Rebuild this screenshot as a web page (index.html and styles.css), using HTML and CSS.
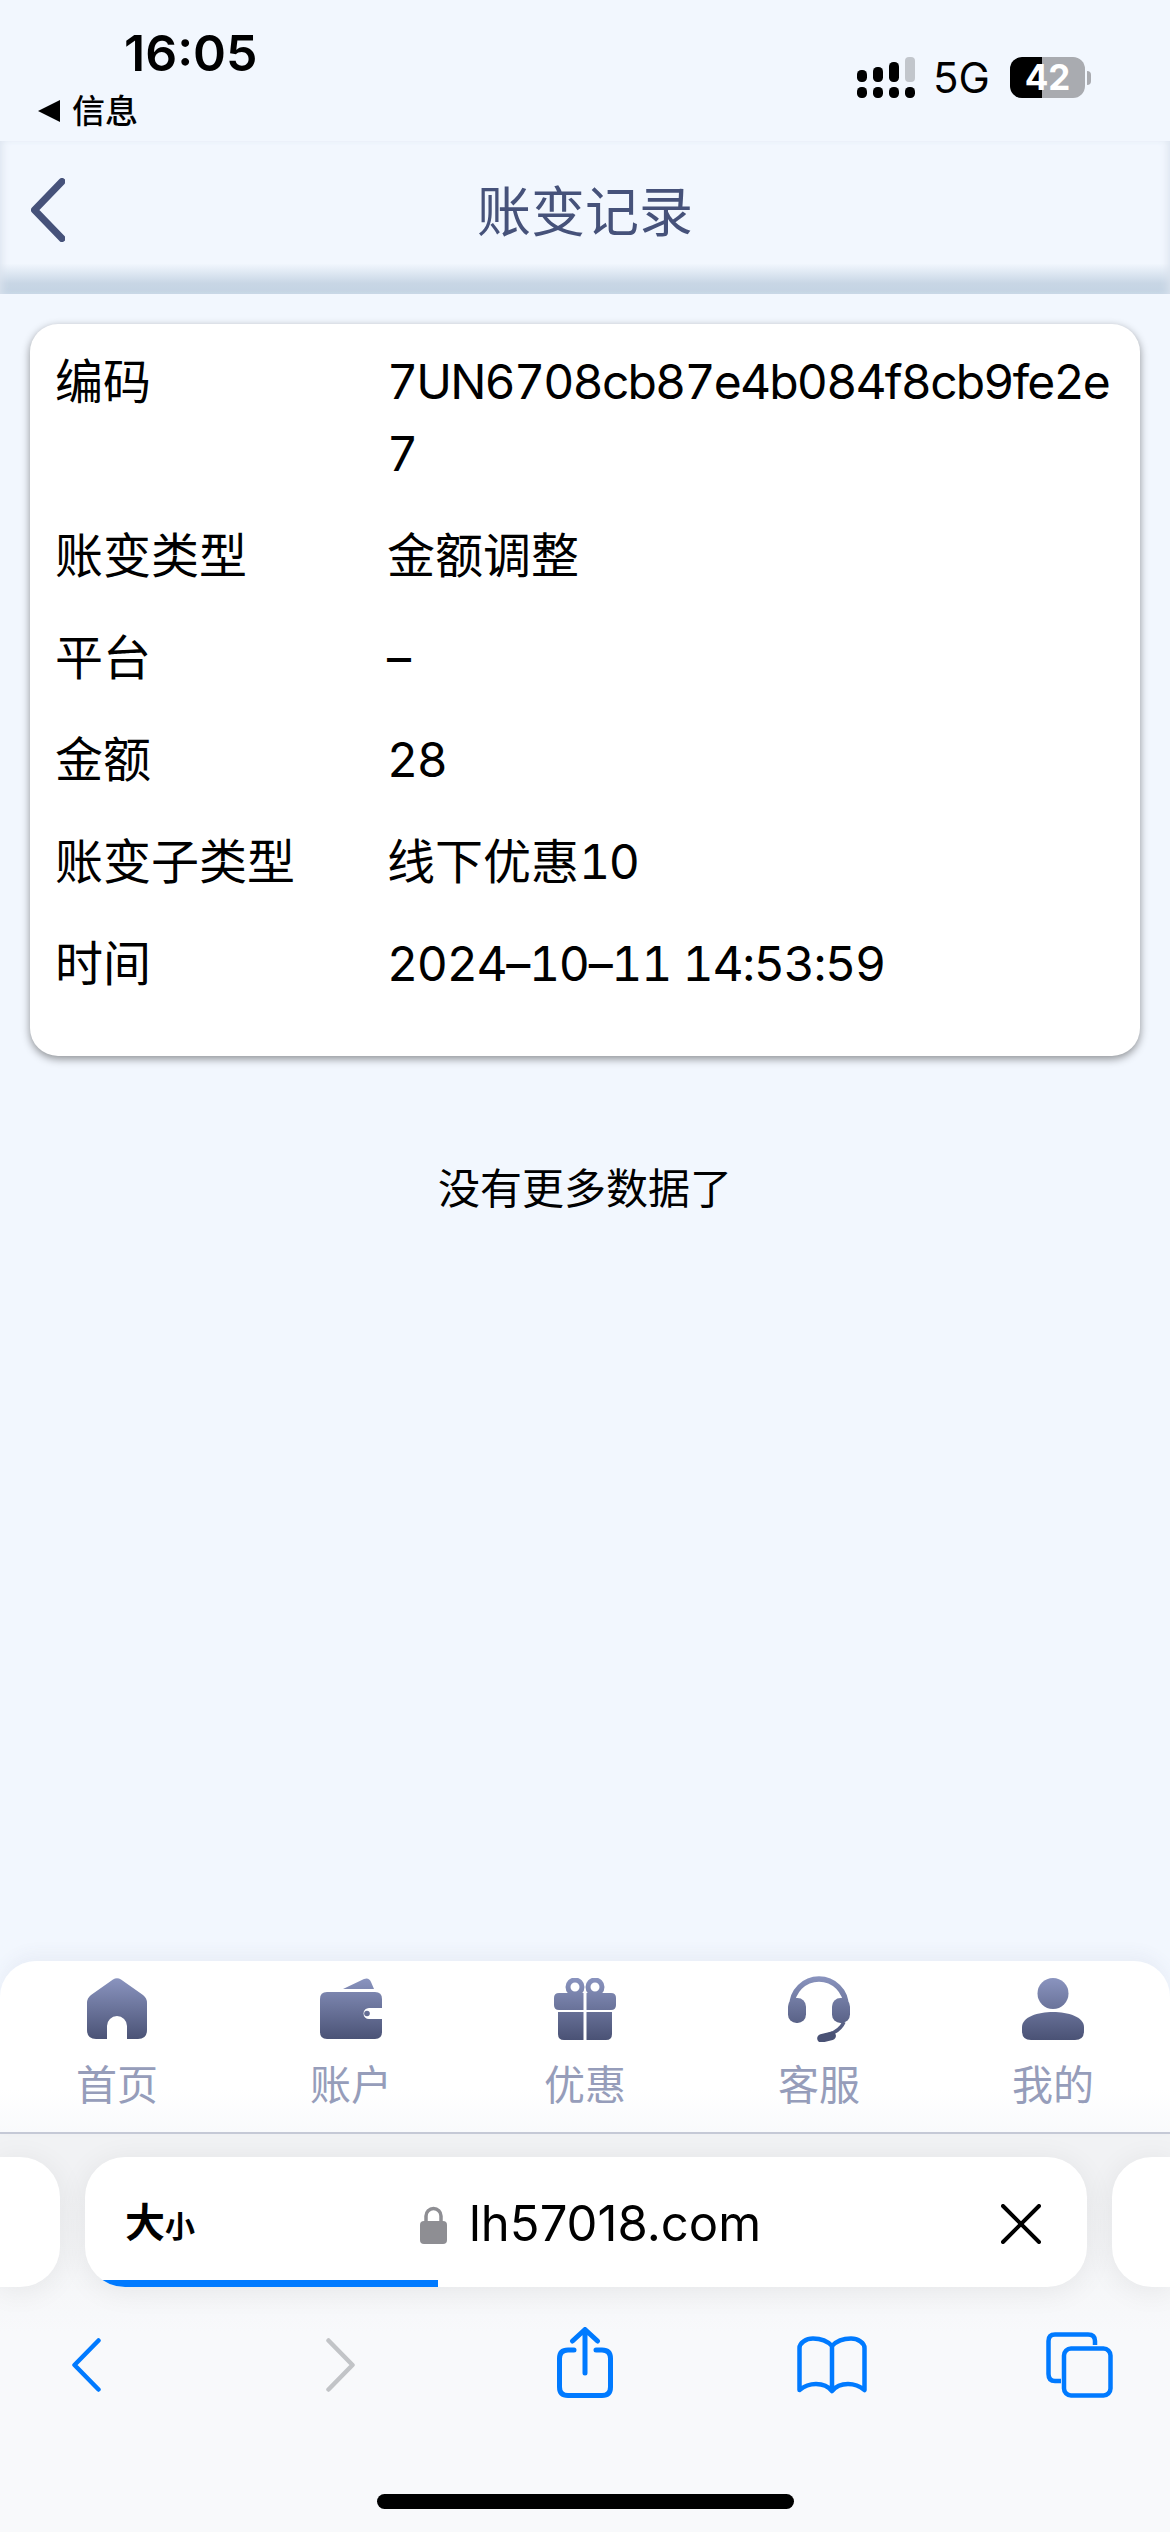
FILE: index.html
```html
<!DOCTYPE html>
<html lang="zh-CN">
<head>
  <meta charset="UTF-8" />
  <meta name="viewport" content="width=device-width, initial-scale=1.0"/>
  <title>账变记录</title>
  <link rel="stylesheet" href="styles.css">
</head>
<body>

  <div class="page">
    <!-- Status bar -->
    <div class="status-bar">
      <div class="status-left">
        <div class="clock">16:05</div>
        <div class="back-app"><span class="back-arrow"></span>信息</div>
      </div>
      <div class="status-right">
        <svg class="signal" viewBox="0 0 58 41">
          <rect x="0" y="13" width="10" height="12" rx="4.5" fill="#000"/>
          <rect x="16" y="10" width="10" height="15" rx="4.5" fill="#000"/>
          <rect x="32" y="5" width="10" height="20" rx="4.5" fill="#000"/>
          <rect x="48" y="0" width="10" height="25" rx="4" fill="#c2c6cc"/>
          <rect x="0" y="30" width="10" height="11" rx="4.5" fill="#000"/>
          <rect x="16" y="30" width="10" height="11" rx="4.5" fill="#000"/>
          <rect x="32" y="30" width="10" height="11" rx="4.5" fill="#000"/>
          <rect x="48" y="30" width="10" height="11" rx="4.5" fill="#000"/>
        </svg>
        <span class="network">5G</span>
        <div class="battery"><span class="battery-level">42</span></div>
        <span class="battery-nub"></span>
      </div>
    </div>

    <!-- Header -->
    <div class="header">
      <svg class="header-back" viewBox="0 0 34 64">
        <path d="M31 3.500 L3.500 32 L31 60.500" fill="none" stroke="#46527a" stroke-width="7" stroke-linecap="round" stroke-linejoin="round"/>
      </svg>
      <h1>账变记录</h1>
    </div>

    <!-- Records -->
    <div class="content">
      <div class="card">
        <div class="row"><div class="label">编码</div><div class="value code">7UN6708cb87e4b084f8cb9fe2e7</div></div>
        <div class="row"><div class="label">账变类型</div><div class="value">金额调整</div></div>
        <div class="row"><div class="label">平台</div><div class="value">–</div></div>
        <div class="row"><div class="label">金额</div><div class="value num">28</div></div>
        <div class="row"><div class="label">账变子类型</div><div class="value">线下优惠<span class="num">10</span></div></div>
        <div class="row"><div class="label">时间</div><div class="value num">2024–10–11 14:53:59</div></div>
      </div>
      <div class="no-more">没有更多数据了</div>
    </div>

    <!-- Tab bar -->
    <div class="tabbar">
      <div class="tab">
        <svg class="tab-icon" viewBox="0 0 62 62">
          <defs>
            <linearGradient id="tabFill" gradientUnits="userSpaceOnUse" x1="0" y1="0" x2="0" y2="62">
              <stop offset="0" stop-color="#8a94bf"/>
              <stop offset="1" stop-color="#4a5275"/>
            </linearGradient>
          </defs>
          <path fill="url(#tabFill)" d="M27 1.5 Q31 -1 35 1.5 L57 17 Q61 20 61 25 V52 Q61 61 52 61 H41 V48 A10 10 0 0 0 21 48 V61 H10 Q1 61 1 52 V25 Q1 20 5 17 Z"/>
        </svg>
        <span>首页</span>
      </div>
      <div class="tab">
        <svg class="tab-icon" viewBox="0 0 62 62">
          <path fill="url(#tabFill)" d="M23 11 L44 1 Q49 -1 51 4 L54 11 Z"/>
          <path fill="url(#tabFill)" fill-rule="evenodd" d="M7 14 H55 Q62 14 62 21 V30 H49 A5.5 5.5 0 0 0 49 41 H62 V54 Q62 61 55 61 H7 Q0 61 0 54 V21 Q0 14 7 14 Z"/>
          <circle cx="47" cy="35.500" r="2.800" fill="url(#tabFill)"/>
        </svg>
        <span>账户</span>
      </div>
      <div class="tab">
        <svg class="tab-icon" viewBox="0 0 62 62">
          <circle cx="21" cy="9" r="7" fill="none" stroke="url(#tabFill)" stroke-width="5"/>
          <circle cx="41" cy="9" r="7" fill="none" stroke="url(#tabFill)" stroke-width="5"/>
          <path fill="url(#tabFill)" d="M5 15 H29.500 V32 H5 Q0 32 0 27 V20 Q0 15 5 15 Z"/>
          <path fill="url(#tabFill)" d="M32.500 15 H57 Q62 15 62 20 V27 Q62 32 57 32 H32.500 Z"/>
          <path fill="url(#tabFill)" d="M4 34 H29.500 V62 H10 Q4 62 4 56 Z"/>
          <path fill="url(#tabFill)" d="M32.500 34 H58 V56 Q58 62 52 62 H32.500 Z"/>
        </svg>
        <span>优惠</span>
      </div>
      <div class="tab">
        <svg class="tab-icon headset" viewBox="0 0 62 66">
          <path fill="none" stroke="url(#tabFill)" stroke-width="5.500" d="M4 30 A27 27 0 0 1 58 30"/>
          <rect x="0" y="22" width="18" height="25" rx="8.500" fill="url(#tabFill)"/>
          <rect x="44" y="22" width="18" height="25" rx="8.500" fill="url(#tabFill)"/>
          <path fill="none" stroke="url(#tabFill)" stroke-width="3.500" d="M56 46 Q52 55 40 59"/>
          <rect x="29" y="57" width="19" height="8.500" rx="4.200" fill="#4a5275" transform="rotate(-14 38 61)"/>
        </svg>
        <span>客服</span>
      </div>
      <div class="tab">
        <svg class="tab-icon" viewBox="0 0 62 62">
          <circle cx="31" cy="15.500" r="15.500" fill="url(#tabFill)"/>
          <path fill="url(#tabFill)" d="M0 49 C0 39 16 34 31 34 C46 34 62 39 62 49 V53 Q62 62 53 62 H9 Q0 62 0 53 Z"/>
        </svg>
        <span>我的</span>
      </div>
    </div>

    <!-- Browser chrome -->
    <div class="browser">
      <div class="browser-tabs">
        <div class="side-tab side-left"></div>
        <div class="address">
          <div class="text-size">大<small>小</small></div>
          <div class="url">
            <svg class="lock" viewBox="0 0 27 39">
              <path d="M6 18 V11 A7.500 7.500 0 0 1 21 11 V18" fill="none" stroke="#8e8e93" stroke-width="3.500"/>
              <rect x="0" y="16" width="27" height="23" rx="4" fill="#8e8e93"/>
            </svg>
            lh57018.com
          </div>
          <svg class="close" viewBox="0 0 40 40">
            <path d="M2 2 L38 38 M38 2 L2 38" fill="none" stroke="#000" stroke-width="4" stroke-linecap="round"/>
          </svg>
          <div class="progress"></div>
        </div>
        <div class="side-tab side-right"></div>
      </div>

      <div class="browser-nav">
        <svg class="nav-prev" viewBox="0 0 29 54">
          <path d="M26.500 2.500 L2.500 27 L26.500 51.500" fill="none" stroke="#007aff" stroke-width="4.500" stroke-linecap="round" stroke-linejoin="round"/>
        </svg>
        <svg class="nav-next" viewBox="0 0 29 54">
          <path d="M2.500 2.500 L26.500 27 L2.500 51.500" fill="none" stroke="#c2c4c7" stroke-width="4.500" stroke-linecap="round" stroke-linejoin="round"/>
        </svg>
        <svg class="nav-share" viewBox="0 0 56 71">
          <path d="M17 23 H11 Q2.500 23 2.500 31.500 V60 Q2.500 68.500 11 68.500 H45 Q53.500 68.500 53.500 60 V31.500 Q53.500 23 45 23 H39" fill="none" stroke="#007aff" stroke-width="5" stroke-linecap="round"/>
          <path d="M28 3 V46 M15.500 14 L28 2.500 L40.500 14" fill="none" stroke="#007aff" stroke-width="5" stroke-linecap="round" stroke-linejoin="round"/>
        </svg>
        <svg class="nav-book" viewBox="0 0 70 58">
          <path d="M35 10 C30 4.500 23 2.500 16 2.500 C9 2.500 2.500 7 2.500 12 V54 C8 49.500 14 48 19 48 C26 48 31 50 35 55 C39 50 44 48 51 48 C56 48 62 49.500 67.500 54 V12 C67.500 7 61 2.500 54 2.500 C47 2.500 40 4.500 35 10 Z M35 10 V55" fill="none" stroke="#007aff" stroke-width="4.500" stroke-linejoin="round"/>
        </svg>
        <svg class="nav-tabs" viewBox="0 0 67 66">
          <path d="M49 13 V9 Q49 2.500 42 2.500 H9 Q2.500 2.500 2.500 9 V42 Q2.500 49 9 49 H15" fill="none" stroke="#007aff" stroke-width="4.500"/>
          <rect x="18" y="16.500" width="46.500" height="47" rx="7" fill="none" stroke="#007aff" stroke-width="4.500"/>
        </svg>
      </div>

      <div class="home-indicator"></div>
    </div>
  </div>

</body>
</html>
```

FILE: styles.css
```css
/* Base Reset */
* {
  margin: 0;
  padding: 0;
  box-sizing: border-box;
}

body {
  width: 1170px;
  height: 2532px;
  overflow: hidden;
  background: #f2f7fe;
  color: #000;
  font-family: "Inter", "Noto Sans CJK SC", sans-serif;
}

.page {
  height: 2532px;
  display: flex;
  flex-direction: column;
}

/* Status bar */
.status-bar {
  height: 141px;
  display: flex;
  justify-content: space-between;
  flex-shrink: 0;
}

.status-left {
  padding: 23px 0 0 38px;
}

.clock {
  margin-left: 86px;
  font-size: 50px;
  line-height: 60px;
  font-weight: 600;
}

.back-app {
  display: flex;
  align-items: center;
  gap: 12px;
  margin-top: 3px;
  font-size: 33px;
  line-height: 50px;
  font-weight: 500;
}

.back-arrow {
  width: 0;
  height: 0;
  border-top: 11px solid transparent;
  border-bottom: 11px solid transparent;
  border-right: 22px solid #000;
}

.status-right {
  display: flex;
  align-items: flex-start;
  padding: 57px 79px 0 0;
}

.signal {
  width: 58px;
  height: 41px;
}

.network {
  margin-left: 18px;
  font-size: 42px;
  line-height: 41px;
  width: 56px;
}

.battery {
  margin-left: 21px;
  width: 75px;
  height: 41px;
  border-radius: 12px;
  background: linear-gradient(to right, #000 43%, #a9abb0 43%);
  color: #fff;
  font-size: 35px;
  font-weight: 700;
  line-height: 41px;
  text-align: center;
}

.battery-nub {
  width: 4px;
  height: 14px;
  margin: 14px 0 0 2px;
  border-radius: 0 4px 4px 0;
  background: #a9abb0;
}

/* Header */
.header {
  height: 153px;
  display: flex;
  align-items: center;
  justify-content: center;
  position: relative;
  flex-shrink: 0;
  padding-bottom: 19px;
  background: linear-gradient(transparent 80%, #d8e3ef 88%, #c8d6e5 93%, #c3d3e3);
  box-shadow: inset 6px 0 8px -4px #dbe3ee, inset -6px 0 8px -4px #dbe3ee;
}

.header-back {
  position: absolute;
  left: 31px;
  top: 37px;
  width: 34px;
  height: 64px;
}

h1 {
  font-size: 54px;
  font-weight: 400;
  color: #46527a;
}

/* Records */
.content {
  flex: 1;
  padding: 30px 30px 0;
}

.card {
  background: #fff;
  border-radius: 28px;
  padding: 22px 25px 26px;
  box-shadow: 0 3px 8px rgba(0, 0, 0, 0.42);
}

.row {
  display: flex;
  font-size: 48px;
  line-height: 72px;
  margin-bottom: 30px;
}

.label {
  width: 332px;
  flex-shrink: 0;
}

.value {
  flex: 1;
  word-break: break-all;
}

.num {
  letter-spacing: -1.3px;
  font-variant-numeric: tabular-nums;
}

.code {
  letter-spacing: -1.8px;
  font-variant-numeric: tabular-nums;
}

.no-more {
  margin-top: 98px;
  text-align: center;
  font-size: 42px;
  line-height: 70px;
}

/* Tab bar */
.tabbar {
  height: 173px;
  flex-shrink: 0;
  display: grid;
  grid-template-columns: repeat(5, 234px);
  background: linear-gradient(#fff 75%, #f9fafc);
  border-radius: 36px 36px 0 0;
  border-bottom: 2px solid #c5c9d6;
  box-shadow: 0 -8px 16px rgba(70, 82, 122, 0.05);
  position: relative;
}

.tab {
  display: flex;
  flex-direction: column;
  align-items: center;
  padding-top: 17px;
  color: #969dba;
  font-size: 41px;
  line-height: 60px;
}

.tab-icon {
  width: 62px;
  height: 62px;
  margin-bottom: 15px;
}

.tab-icon.headset {
  height: 66px;
  margin: -2px 0 13px;
}

/* Browser chrome */
.browser {
  height: 398px;
  flex-shrink: 0;
  background: linear-gradient(#f1f2f4, #f1f2f4 60px, #f8f9fb 200px);
  display: flex;
  flex-direction: column;
}

.browser-tabs {
  display: grid;
  grid-template-columns: 60px 1002px 59px;
  gap: 24px 25px;
  margin-top: 23px;
  height: 130px;
}

.side-tab,
.address {
  background: #fff;
  box-shadow: 0 4px 30px rgba(0, 0, 0, 0.07);
}

.side-left {
  border-radius: 0 40px 40px 0;
}

.side-right {
  border-radius: 40px 0 0 40px;
}

.address {
  display: flex;
  align-items: center;
  position: relative;
  overflow: hidden;
  border-radius: 40px;
  padding: 4px 46px 0 40px;
}

.text-size {
  width: 72px;
  font-size: 40px;
  line-height: 50px;
  font-weight: 600;
  white-space: nowrap;
}

.text-size small {
  font-size: 30px;
}

.url {
  display: flex;
  align-items: center;
  gap: 22px;
  margin-left: 223px;
  font-family: "Inter", sans-serif;
  font-size: 49px;
  line-height: 50px;
}

.lock {
  width: 27px;
  height: 39px;
}

.close {
  width: 40px;
  height: 40px;
  margin-left: auto;
}

.progress {
  position: absolute;
  left: 0;
  bottom: 0;
  width: 353px;
  height: 7px;
  background: #007aff;
}

.browser-nav {
  position: relative;
  height: 0;
}

.browser-nav svg {
  position: absolute;
}

.nav-prev { left: 72px; top: 51px; width: 29px; height: 54px; }
.nav-next { left: 326px; top: 51px; width: 29px; height: 54px; }
.nav-share { left: 557px; top: 40px; width: 56px; height: 71px; }
.nav-book { left: 797px; top: 49px; width: 70px; height: 58px; }
.nav-tabs { left: 1046px; top: 45px; width: 67px; height: 66px; }

.home-indicator {
  width: 417px;
  height: 15px;
  margin: 207px auto 0;
  border-radius: 8px;
  background: #000;
}
```
